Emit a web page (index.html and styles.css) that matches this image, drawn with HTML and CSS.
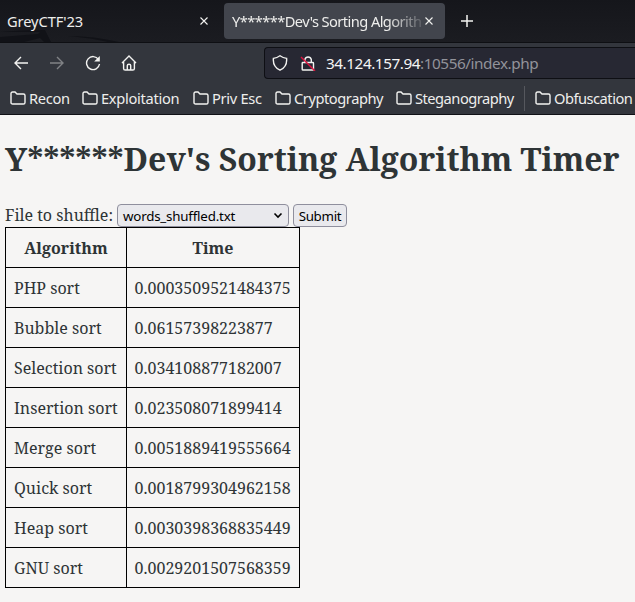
FILE: index.html
```html
<!DOCTYPE html>
<html lang="en">
<head>
<meta charset="utf-8">
<title>Sorting Algorithm Timer</title>
<link rel="stylesheet" href="styles.css">
</head>
<body>
<svg class="defs" width="0" height="0">
  <symbol id="folder" viewBox="0 0 16 14"><path d="M1 11V2.6Q1 1 2.6 1H5l2 2h6.4Q15 3 15 4.6v6.8Q15 13 13.4 13H2.6Q1 13 1 11.4z"/></symbol>
  <symbol id="close" viewBox="0 0 8 8"><path d="M.5.5l7 7M7.5.5l-7 7"/></symbol>
</svg>
<header class="browser">
  <div class="tabs">
    <svg class="theme-art" width="220" height="42" viewBox="0 0 220 42"><path class="wing" d="M0 32Q20 30 45 30L51 42H44L40 38L24 42H0V37L38 34L40 32z"/><path class="wing" d="M68 36Q94 36 119 42H108Q92 38 68 36z"/></svg>
    <div class="tab"><span class="tab-title">GreyCTF'23</span><svg class="close"><use href="#close"/></svg></div>
    <div class="tab active"><span class="tab-title fade">Y******Dev's Sorting Algorith</span><svg class="close"><use href="#close"/></svg></div>
    <svg class="plus" viewBox="0 0 12 12"><path d="M6 0v12M0 6h12"/></svg>
  </div>
  <div class="toolbar">
    <svg class="nav" viewBox="0 0 16 16"><path d="M15 8H2M8 2L2 8l6 6"/></svg>
    <svg class="nav disabled" viewBox="0 0 16 16"><path d="M1 8h13M8 2l6 6-6 6"/></svg>
    <svg class="nav" viewBox="0 0 16 16"><path d="M13.5 4.5A6.5 6.5 0 1 0 14.5 9"/><path class="solid" d="M14.8 1v5.6H9.2z"/></svg>
    <svg class="nav" viewBox="0 0 16 16"><path d="M1 8l7-7 7 7M2.6 7v6.4Q2.6 15 4.2 15H11.8Q13.4 15 13.4 13.4V7M6.3 15V10.5Q6.3 9.2 8 9.2T9.7 10.5V15"/></svg>
    <div class="address">
      <svg class="shield" viewBox="0 0 16 16"><path d="M8 .8Q11 3 14.6 3.4Q15.4 11.8 8 15.2Q.6 11.8 1.4 3.4Q5 3 8 .8z"/></svg>
      <svg class="lock" viewBox="0 0 16 16"><path d="M4.9 7.5V4.5a3.3 3.3 0 0 1 6.4 0v3M3.6 7.5h9.2q.7 0 .7.7v6q0 .8-.8.8H3q-.8 0-.8-.8v-6q0-.7.7-.7z"/><path class="slash" d="M1 2l14 14"/></svg>
      <span class="url"><b class="host">34.124.157.94</b>:10556/index.php</span>
    </div>
  </div>
  <nav class="bookmarks">
    <a class="bookmark recon"><svg><use href="#folder"/></svg>Recon</a>
    <a class="bookmark exploit"><svg><use href="#folder"/></svg>Exploitation</a>
    <a class="bookmark priv"><svg><use href="#folder"/></svg>Priv Esc</a>
    <a class="bookmark crypto"><svg><use href="#folder"/></svg>Cryptography</a>
    <a class="bookmark stego"><svg><use href="#folder"/></svg>Steganography</a>
    <i class="divider"></i>
    <a class="bookmark obf"><svg><use href="#folder"/></svg>Obfuscation</a>
  </nav>
</header>
<main>
  <h1>Y******Dev's Sorting Algorithm Timer</h1>
  <form class="picker">
    <label for="file">File to shuffle:</label>
    <div class="select" id="file"><span>words_shuffled.txt</span><svg viewBox="0 0 8 5"><path d="M.5.5L4 4 7.5.5"/></svg></div>
    <button type="button">Submit</button>
  </form>
  <table>
    <tr><th>Algorithm</th><th>Time</th></tr>
    <tr><td>PHP sort</td><td>0.0003509521484375</td></tr>
    <tr><td>Bubble sort</td><td>0.06157398223877</td></tr>
    <tr><td>Selection sort</td><td>0.034108877182007</td></tr>
    <tr><td>Insertion sort</td><td>0.023508071899414</td></tr>
    <tr><td>Merge sort</td><td>0.0051889419555664</td></tr>
    <tr><td>Quick sort</td><td>0.0018799304962158</td></tr>
    <tr><td>Heap sort</td><td>0.0030398368835449</td></tr>
    <tr><td>GNU sort</td><td>0.0029201507568359</td></tr>
  </table>
</main>
</body>
</html>
```
FILE: styles.css
```css
* { box-sizing: border-box; }
body { margin: 0; height: 602px; overflow: hidden; background: #f6f5f4; color: #2e3436; font-family: "Noto Serif", "DejaVu Serif Condensed", "DejaVu Serif", serif; font-size: 16px; }
svg { flex: none; fill: none; stroke: #f3f3f1; stroke-width: 1.4; }
.defs { position: absolute; }
.browser { height: 115px; background: #33363d; border-bottom: 1px solid #101116; color: #eeeeec; font-family: "Noto Sans", sans-serif; font-size: 14.67px; white-space: nowrap; }
.tabs { position: relative; height: 43px; display: flex; align-items: center; background: linear-gradient(#15161b, #1b1c21); border-bottom: 1px solid #0e0f13; }
.theme-art { position: absolute; left: 0; top: 0; stroke: none; }
.wing { fill: #111217; }
.tab { position: relative; display: flex; align-items: center; justify-content: space-between; width: 221px; height: 36px; padding: 0 13px 0 7px; margin-right: 3px; }
.tab.active { margin: 0; padding: 0 12px 0 8px; background: #42454d; border-radius: 4px; }
.tab-title { flex: none; letter-spacing: -.1px; }
.fade { width: 191px; letter-spacing: -.58px; mask-image: linear-gradient(to right, #000 155px, transparent 196px); }
.close { width: 8px; height: 8px; stroke-width: 1.1; }
.plus { width: 12px; height: 12px; margin-left: 16px; stroke-width: 1.5; }
.toolbar { display: flex; align-items: center; height: 40px; padding-left: 13px; gap: 20px; }
.nav { width: 16px; height: 16px; }
.nav.disabled { opacity: .4; }
.solid { fill: #f3f3f1; stroke: none; }
.address { flex: 1; display: flex; align-items: center; height: 32px; margin-left: 107px; padding-left: 7px; background: #272833; border: 1px solid #0e0f14; border-right: 0; border-radius: 4px 0 0 4px; }
.shield, .lock { width: 16px; height: 16px; margin-right: 12px; }
.lock { margin-right: 10px; }
.slash { stroke: #e0123f; }
.url { color: #92939a; font-size: 15.3px; letter-spacing: -.44px; }
.host { font-weight: 400; color: #f5f5f5; }
.bookmarks { display: flex; align-items: center; height: 30px; padding-left: 10px; letter-spacing: -.45px; }
.bookmark { flex: none; display: flex; align-items: center; gap: 3px; }
.bookmark svg { width: 16px; height: 14px; }
.recon { width: 72px; letter-spacing: -.3px; }
.exploit { width: 111px; letter-spacing: -.3px; }
.priv { width: 82px; letter-spacing: -.3px; }
.crypto { width: 121px; }
.stego { width: 128px; letter-spacing: -.5px; }
.obf { letter-spacing: -.5px; }
.divider { width: 1px; height: 25px; margin-right: 10px; background: #56585e; }
main { padding: 22px 5px 0; }
h1 { margin: 0; height: 43px; line-height: 43px; font-size: 32px; white-space: nowrap; }
.picker { display: flex; align-items: center; height: 22px; margin: 24px 0 1px; }
label { width: 112px; white-space: nowrap; }
.select { display: flex; align-items: center; justify-content: space-between; width: 172px; height: 23px; padding: 1px 6px 0 5px; letter-spacing: -.2px; }
.select, button { background: #e9e9ed; color: #000; border: 1px solid #8f8f9d; border-radius: 4px; font: 13.33px "Noto Sans", sans-serif; }
.select svg { width: 8px; height: 5px; overflow: visible; stroke: #000; stroke-width: 1.6; }
button { width: 54px; height: 23px; margin-left: 4px; padding: 1px 0 0; letter-spacing: -.3px; }
table { width: 295px; border-collapse: collapse; table-layout: fixed; }
th, td { height: 40px; padding: 0 8px; border: 1px solid #000; white-space: nowrap; }
td { padding-left: 7.6px; }
td:first-child { padding-left: 8px; }
th:first-child { width: 121px; }
```
